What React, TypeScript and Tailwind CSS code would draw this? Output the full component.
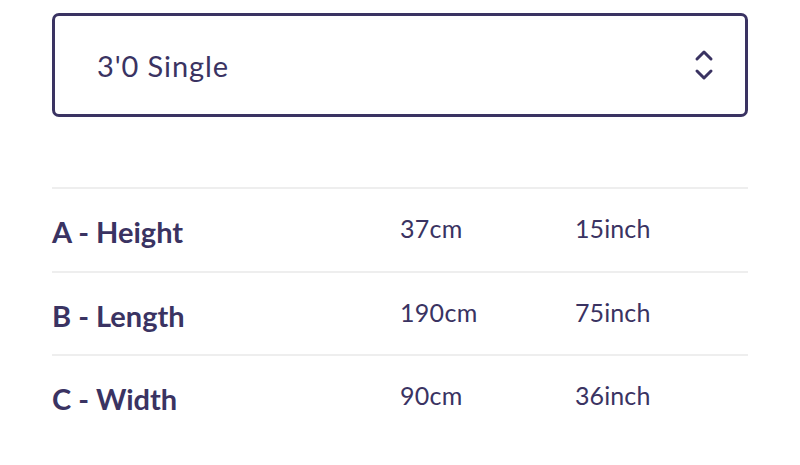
import React from "react";

const rows = [
  { label: "A - Height", cm: "37cm", inch: "15inch" },
  { label: "B - Length", cm: "190cm", inch: "75inch" },
  { label: "C - Width", cm: "90cm", inch: "36inch" },
];

export default function App() {
  return (
    <div
      className="w-[800px] h-[465px] bg-white overflow-hidden text-[#3a3362]"
      style={{ fontFamily: "Lato, 'Noto Sans', sans-serif" }}
    >
      <div className="px-[52px] pt-[13px]">
        <div className="h-[104px] border-[3px] border-[#3a3362] rounded-[7px] flex items-center justify-between pl-[42px] pr-[30px]">
          <span className="text-[29px] font-normal tracking-[0.9px] mt-[2px]">3'0 Single</span>
          <svg width="22" height="36" viewBox="0 0 22 36" fill="none" stroke="#3a3362" strokeWidth="3" strokeLinecap="round" strokeLinejoin="round">
            <path d="M4 12 L11 5 L18 12" />
            <path d="M4 24 L11 31 L18 24" />
          </svg>
        </div>
        <div className="mt-[70px]">
          {rows.map((r) => (
            <div key={r.label} className="border-t-2 border-[#eeeeee] h-[83.5px] flex items-center">
              <div className="w-[348px] text-[29px] font-bold pt-[4px]">{r.label}</div>
              <div className="w-[175px] text-[25px] font-normal tracking-[0.3px] pb-[2px]">{r.cm}</div>
              <div className="text-[25px] font-normal tracking-[0.1px] pb-[2px]">{r.inch}</div>
            </div>
          ))}
        </div>
      </div>
    </div>
  );
}
